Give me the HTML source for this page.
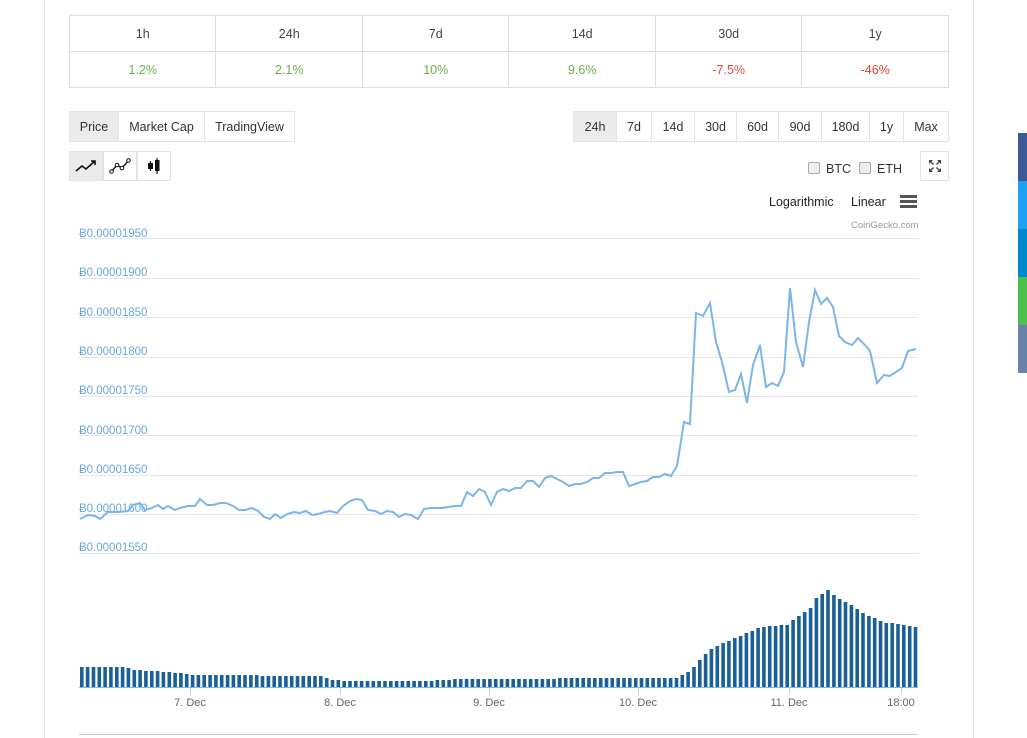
<!DOCTYPE html>
<html><head><meta charset="utf-8"><style>
*{box-sizing:border-box;margin:0;padding:0}
body{width:1027px;height:736px;background:#fff;font-family:"Liberation Sans",sans-serif;font-size:12.5px;color:#333;position:relative;overflow:hidden}
.abs{position:absolute}
.frame{left:44px;top:-2px;width:930px;height:740px;border-left:1px solid #e3e3e3;border-right:1px solid #e3e3e3}
table{position:absolute;left:69px;top:15px;width:880px;border-collapse:collapse}
td{border:1px solid #dcdcdc;height:36px;text-align:center;width:146.6px;color:#444}
td.g{color:#6ab04c}td.r{color:#e0463c}
.btn{position:absolute;top:111px;height:31px;border:1px solid #e3e3e3;display:flex;align-items:center;justify-content:center;background:#fff}
.on{background:#ebebeb}
.ic{top:151px;height:30px;width:34px}
.soc{position:absolute;left:1018px;width:9px;height:48px}
</style></head><body>
<div class="abs frame"></div>
<table><tr><td>1h</td><td>24h</td><td>7d</td><td>14d</td><td>30d</td><td>1y</td></tr>
<tr><td class="g">1.2%</td><td class="g">2.1%</td><td class="g">10%</td><td class="g">9.6%</td><td class="r">-7.5%</td><td class="r">-46%</td></tr></table>
<div class="btn on" style="left:69px;width:50px">Price</div>
<div class="btn" style="left:118px;width:87px">Market Cap</div>
<div class="btn" style="left:204px;width:91px">TradingView</div>
<div class="btn on" style="left:573px;width:44px">24h</div>
<div class="btn" style="left:616px;width:36px">7d</div>
<div class="btn" style="left:651px;width:44px">14d</div>
<div class="btn" style="left:694px;width:43px">30d</div>
<div class="btn" style="left:736px;width:43px">60d</div>
<div class="btn" style="left:778px;width:44px">90d</div>
<div class="btn" style="left:821px;width:49px">180d</div>
<div class="btn" style="left:869px;width:35px">1y</div>
<div class="btn" style="left:903px;width:46px">Max</div>
<div class="btn on ic" style="left:69px"><svg width="22" height="14"><path d="M1 12L7 7L11 10L20 2M16 2H20V6" fill="none" stroke="#111" stroke-width="1.6"/></svg></div>
<div class="btn ic" style="left:103px"><svg width="22" height="16"><path d="M2 14L8 7L13 10L20 2" fill="none" stroke="#111" stroke-width="1.4"/><circle cx="2.5" cy="13.5" r="1.8" fill="#fff" stroke="#111"/><circle cx="8" cy="7" r="1.8" fill="#fff" stroke="#111"/><circle cx="13" cy="10" r="1.8" fill="#fff" stroke="#111"/><circle cx="19.5" cy="2.5" r="1.8" fill="#fff" stroke="#111"/></svg></div>
<div class="btn ic" style="left:137px"><svg width="14" height="18"><path d="M3.5 4V14M10 1V17" stroke="#111" stroke-width="1.2"/><rect x="1" y="6" width="5" height="6" fill="#111"/><rect x="8" y="3" width="4.5" height="11" fill="#111"/></svg></div>
<div class="btn" style="left:920px;top:151px;width:29px;height:30px"><svg width="12" height="12"><path d="M1 1L4.5 4.5M11 1L7.5 4.5M1 11L4.5 7.5M11 11L7.5 7.5" stroke="#444" stroke-width="1.4"/><path d="M0 0H4L0 4ZM12 0H8L12 4ZM0 12H4L0 8ZM12 12H8L12 8Z" fill="#444"/></svg></div>
<div class="abs" style="left:808px;top:162px;width:12px;height:12px;border:1px solid #aaa;border-radius:2px;background:#eee"></div>
<div class="abs" style="left:826px;top:162px">BTC</div>
<div class="abs" style="left:859px;top:162px;width:12px;height:12px;border:1px solid #aaa;border-radius:2px;background:#eee"></div>
<div class="abs" style="left:877px;top:162px">ETH</div>
<div class="abs" style="left:769px;top:195px;color:#222">Logarithmic</div>
<div class="abs" style="left:851px;top:195px;color:#222">Linear</div>
<div class="abs" style="left:900px;top:195px;width:17px;height:3px;background:#555;box-shadow:0 5px 0 #555,0 10px 0 #555"></div>
<div class="abs" style="left:851px;top:220px;font-size:9.5px;color:#999">CoinGecko.com</div>
<div class="soc" style="top:133px;background:#3d5a98"></div>
<div class="soc" style="top:181px;background:#1da1f2"></div>
<div class="soc" style="top:229px;background:#0088cc"></div>
<div class="soc" style="top:277px;background:#4cc04c"></div>
<div class="soc" style="top:325px;background:#6784a8"></div>
<svg class="abs" style="left:0;top:0" width="1027" height="736" id="ch">
<g stroke="#e6e6e6" stroke-width="1">
<line x1="79" x2="918" y1="238.5" y2="238.5"/><line x1="79" x2="918" y1="278.5" y2="278.5"/><line x1="79" x2="918" y1="317.5" y2="317.5"/><line x1="79" x2="918" y1="357.5" y2="357.5"/><line x1="79" x2="918" y1="396.5" y2="396.5"/><line x1="79" x2="918" y1="435.5" y2="435.5"/><line x1="79" x2="918" y1="475.5" y2="475.5"/><line x1="79" x2="918" y1="514.5" y2="514.5"/><line x1="79" x2="918" y1="553.5" y2="553.5"/>
<line x1="79" x2="918" y1="734.5" y2="734.5" stroke="#ccc"/>
</g>
<g fill="#6aa7dc" font-size="11.5" font-family="Liberation Sans,sans-serif">
<text x="79" y="237">Ƀ0.00001950</text><text x="79" y="276">Ƀ0.00001900</text><text x="79" y="316">Ƀ0.00001850</text><text x="79" y="355">Ƀ0.00001800</text><text x="79" y="394">Ƀ0.00001750</text><text x="79" y="434">Ƀ0.00001700</text><text x="79" y="473">Ƀ0.00001650</text><text x="79" y="512">Ƀ0.00001600</text><text x="79" y="551">Ƀ0.00001550</text>
</g>
<polyline fill="none" stroke="#7cb5ec" stroke-width="2" points="80,519 88,515 95,516 100,519 108,512 118,512 128,511 133,505 140,503 145,510 152,508 158,505 163,509 168,506 175,510 180,508 188,506 195,506 200,499 207,505 213,505 220,503 226,503 233,506 239,510 245,510 252,508 258,511 264,517 270,519 275,514 281,518 287,514 294,512 300,513 306,511 312,515 318,514 325,512 330,511 337,513 343,506 350,501 356,499 362,500 368,510 375,511 381,514 387,511 393,512 399,517 405,514 411,515 418,519 424,509 430,508 436,508 442,508 448,507 455,506 461,506 467,492 473,496 479,489 485,492 491,505 497,492 503,489 509,491 515,488 521,488 527,481 533,481 539,487 545,478 551,476 557,479 563,482 569,486 575,484 581,484 587,482 593,478 599,478 605,473 611,473 617,472 623,472 629,486 635,484 641,482 647,481 653,477 659,477 665,474 671,476 677,466 684,422 690,424 696,313 703,316 710,303 716,342 722,362 729,392 735,390 741,374 747,403 753,365 760,345 766,387 772,383 778,386 784,372 790,288 796,342 803,367 809,322 815,290 821,304 827,298 833,307 839,336 845,342 852,345 858,338 864,344 870,351 877,383 884,375 890,376 896,372 902,368 908,351 916,349"/>
<g id="bars" fill="#1a5f96"></g>
<line x1="79" x2="918" y1="687.5" y2="687.5" stroke="#7cb5ec"/>
<g stroke="#ccc"><line x1="190.5" x2="190.5" y1="688" y2="694"/><line x1="340.5" x2="340.5" y1="688" y2="694"/><line x1="489.5" x2="489.5" y1="688" y2="694"/><line x1="638.5" x2="638.5" y1="688" y2="694"/><line x1="789.5" x2="789.5" y1="688" y2="694"/><line x1="901.5" x2="901.5" y1="688" y2="694"/></g>
<g fill="#666" font-size="11" font-family="Liberation Sans,sans-serif" text-anchor="middle">
<text x="190" y="706">7. Dec</text><text x="340" y="706">8. Dec</text><text x="489" y="706">9. Dec</text><text x="638" y="706">10. Dec</text><text x="789" y="706">11. Dec</text><text x="901" y="706">18:00</text></g>
</svg>
<script>
var prof=[[80,20],[125,20],[130,17],[150,16],[190,13],[190,12],[320,11],[330,7],[345,6],[420,6],[460,8],[650,9],[675,9],[690,17],[700,30],[712,40],[740,52],[760,60],[785,62],[795,70],[808,78],[815,90],[826,97],[835,90],[850,82],[860,75],[880,65],[917,60]];
function h(x){for(var i=1;i<prof.length;i++){if(x<=prof[i][0]){var a=prof[i-1],b=prof[i];var t=(b[0]==a[0])?1:(x-a[0])/(b[0]-a[0]);return a[1]+t*(b[1]-a[1]);}}return 60;}
var g=document.getElementById('bars'),s='';
for(var x=80;x<=915;x+=5.83){var hh=Math.round(h(x));s+='<rect x="'+x.toFixed(1)+'" y="'+(687-hh)+'" width="3.6" height="'+hh+'"/>';}
g.innerHTML=s;
</script>
</body></html>
